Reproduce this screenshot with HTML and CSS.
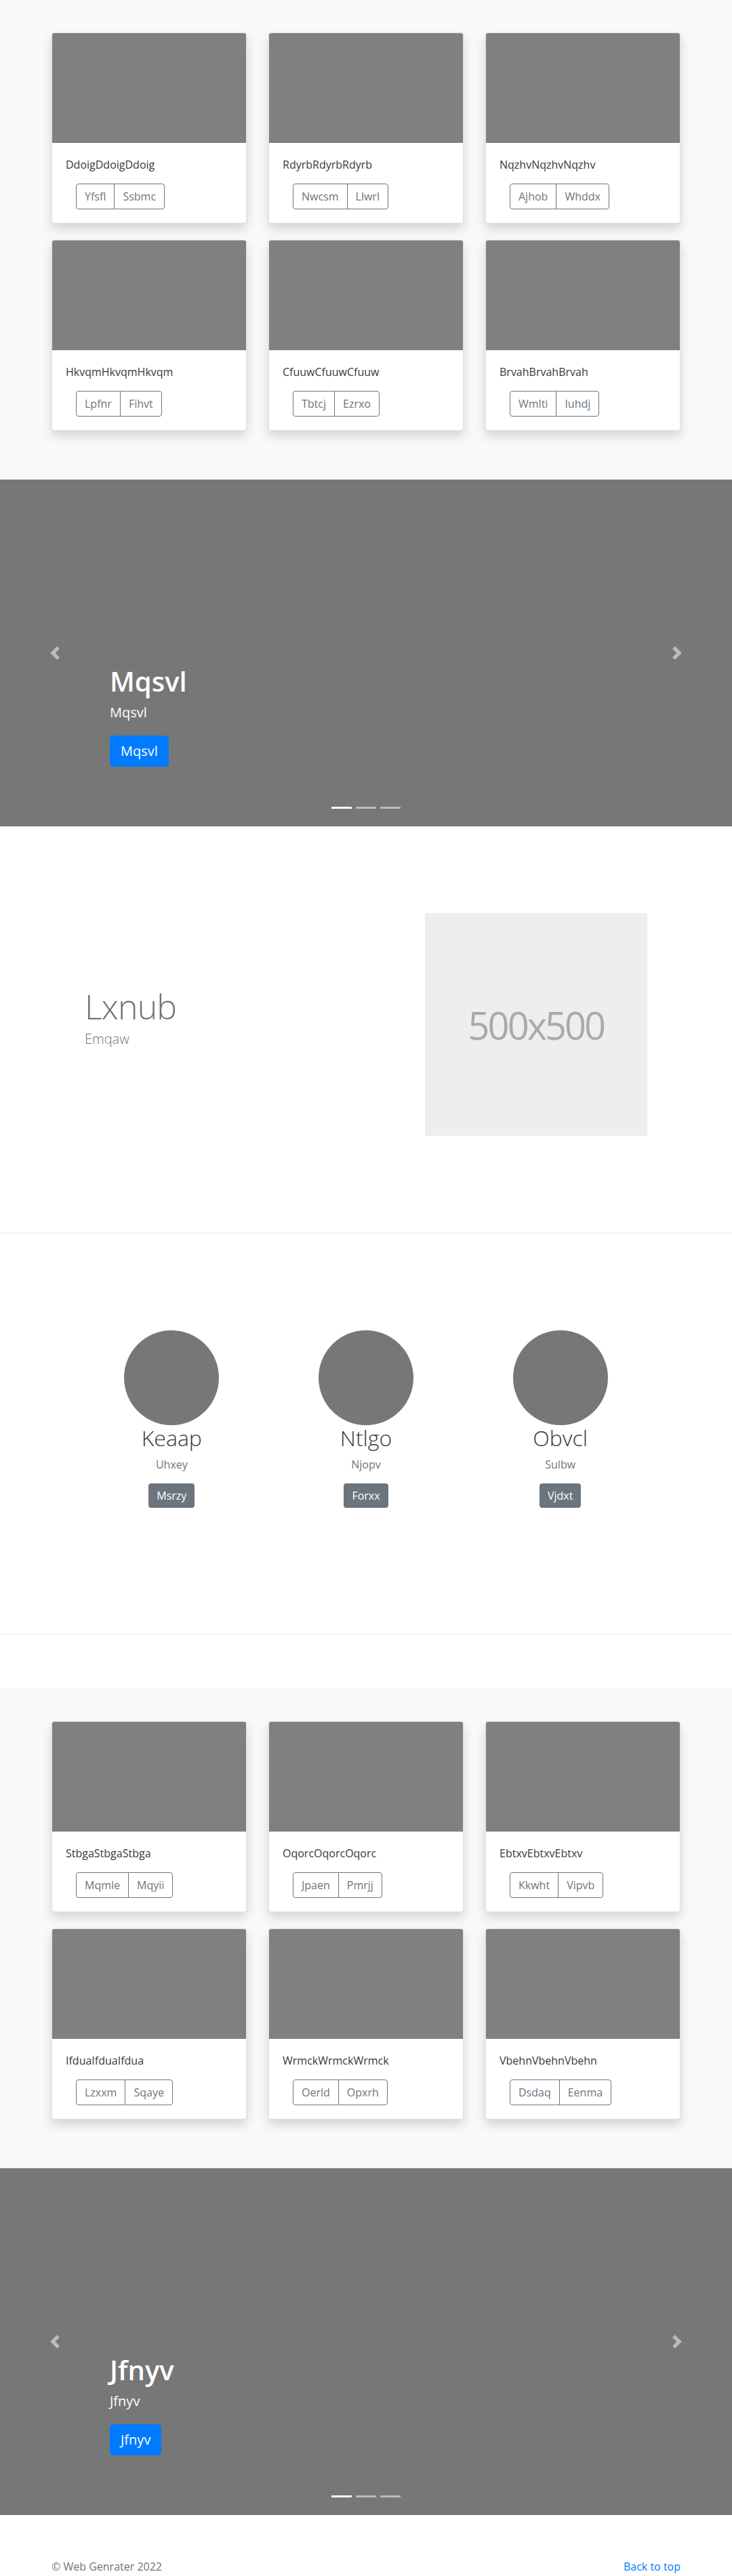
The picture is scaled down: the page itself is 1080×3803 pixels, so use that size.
FILE: index.html
```html
<!DOCTYPE html>
<html lang="en">
<head>
    <meta charset="UTF-8">
    <meta name="viewport" content="width=device-width, initial-scale=1.0">
    <title>Web Genrater</title>
    <link rel="stylesheet" href="styles.css">
</head>
<body>
    <main>
        <section class="album">
            <div class="album-grid">
                <div class="card">
                    <div class="card-img"></div>
                    <div class="card-body">
                        <p class="card-text">DdoigDdoigDdoig</p>
                        <div class="btn-group"><button class="btn-outline">Yfsfl</button><button class="btn-outline">Ssbmc</button></div>
                    </div>
                </div>
                <div class="card">
                    <div class="card-img"></div>
                    <div class="card-body">
                        <p class="card-text">RdyrbRdyrbRdyrb</p>
                        <div class="btn-group"><button class="btn-outline">Nwcsm</button><button class="btn-outline">Llwrl</button></div>
                    </div>
                </div>
                <div class="card">
                    <div class="card-img"></div>
                    <div class="card-body">
                        <p class="card-text">NqzhvNqzhvNqzhv</p>
                        <div class="btn-group"><button class="btn-outline">Ajhob</button><button class="btn-outline">Whddx</button></div>
                    </div>
                </div>
                <div class="card">
                    <div class="card-img"></div>
                    <div class="card-body">
                        <p class="card-text">HkvqmHkvqmHkvqm</p>
                        <div class="btn-group"><button class="btn-outline">Lpfnr</button><button class="btn-outline">Fihvt</button></div>
                    </div>
                </div>
                <div class="card">
                    <div class="card-img"></div>
                    <div class="card-body">
                        <p class="card-text">CfuuwCfuuwCfuuw</p>
                        <div class="btn-group"><button class="btn-outline">Tbtcj</button><button class="btn-outline">Ezrxo</button></div>
                    </div>
                </div>
                <div class="card">
                    <div class="card-img"></div>
                    <div class="card-body">
                        <p class="card-text">BrvahBrvahBrvah</p>
                        <div class="btn-group"><button class="btn-outline">Wmlti</button><button class="btn-outline">Iuhdj</button></div>
                    </div>
                </div>
            </div>
        </section>

        <section class="carousel">
            <ol class="carousel-indicators">
                <li class="active"></li>
                <li></li>
                <li></li>
            </ol>
            <div class="carousel-caption">
                <h1>Mqsvl</h1>
                <p>Mqsvl</p>
                <p><a class="btn-lg" href="#">Mqsvl</a></p>
            </div>
            <a class="carousel-control prev" href="#">
                <svg width="20" height="20" viewBox="0 0 8 8"><path fill="#fff" d="M5.25 0l-4 4 4 4 1.5-1.5L4.25 4l2.5-2.5L5.25 0z"/></svg>
            </a>
            <a class="carousel-control next" href="#">
                <svg width="20" height="20" viewBox="0 0 8 8"><path fill="#fff" d="M2.75 0l-1.5 1.5L3.75 4l-2.5 2.5L2.75 8l4-4-4-4z"/></svg>
            </a>
        </section>

        <section class="featurette">
            <div class="narrow">
                <div class="feature-text">
                    <h2 class="featurette-heading">Lxnub</h2>
                    <p class="lead">Emqaw</p>
                </div>
                <div class="feature-media">
                    <div class="placeholder">500x500</div>
                </div>
            </div>
        </section>

        <section class="marketing">
            <div class="narrow">
                <div class="person">
                    <div class="avatar"></div>
                    <h2>Keaap</h2>
                    <p class="muted">Uhxey</p>
                    <p><a class="btn-secondary" href="#">Msrzy</a></p>
                </div>
                <div class="person">
                    <div class="avatar"></div>
                    <h2>Ntlgo</h2>
                    <p class="muted">Njopv</p>
                    <p><a class="btn-secondary" href="#">Forxx</a></p>
                </div>
                <div class="person">
                    <div class="avatar"></div>
                    <h2>Obvcl</h2>
                    <p class="muted">Sulbw</p>
                    <p><a class="btn-secondary" href="#">Vjdxt</a></p>
                </div>
            </div>
        </section>

        <section class="album album-second">
            <div class="album-grid">
                <div class="card">
                    <div class="card-img"></div>
                    <div class="card-body">
                        <p class="card-text">StbgaStbgaStbga</p>
                        <div class="btn-group"><button class="btn-outline">Mqmle</button><button class="btn-outline">Mqyii</button></div>
                    </div>
                </div>
                <div class="card">
                    <div class="card-img"></div>
                    <div class="card-body">
                        <p class="card-text">OqorcOqorcOqorc</p>
                        <div class="btn-group"><button class="btn-outline">Jpaen</button><button class="btn-outline">Pmrjj</button></div>
                    </div>
                </div>
                <div class="card">
                    <div class="card-img"></div>
                    <div class="card-body">
                        <p class="card-text">EbtxvEbtxvEbtxv</p>
                        <div class="btn-group"><button class="btn-outline">Kkwht</button><button class="btn-outline">Vipvb</button></div>
                    </div>
                </div>
                <div class="card">
                    <div class="card-img"></div>
                    <div class="card-body">
                        <p class="card-text">IfduaIfduaIfdua</p>
                        <div class="btn-group"><button class="btn-outline">Lzxxm</button><button class="btn-outline">Sqaye</button></div>
                    </div>
                </div>
                <div class="card">
                    <div class="card-img"></div>
                    <div class="card-body">
                        <p class="card-text">WrmckWrmckWrmck</p>
                        <div class="btn-group"><button class="btn-outline">Oerld</button><button class="btn-outline">Opxrh</button></div>
                    </div>
                </div>
                <div class="card">
                    <div class="card-img"></div>
                    <div class="card-body">
                        <p class="card-text">VbehnVbehnVbehn</p>
                        <div class="btn-group"><button class="btn-outline">Dsdaq</button><button class="btn-outline">Eenma</button></div>
                    </div>
                </div>
            </div>
        </section>

        <section class="carousel">
            <ol class="carousel-indicators">
                <li class="active"></li>
                <li></li>
                <li></li>
            </ol>
            <div class="carousel-caption">
                <h1>Jfnyv</h1>
                <p>Jfnyv</p>
                <p><a class="btn-lg" href="#">Jfnyv</a></p>
            </div>
            <a class="carousel-control prev" href="#">
                <svg width="20" height="20" viewBox="0 0 8 8"><path fill="#fff" d="M5.25 0l-4 4 4 4 1.5-1.5L4.25 4l2.5-2.5L5.25 0z"/></svg>
            </a>
            <a class="carousel-control next" href="#">
                <svg width="20" height="20" viewBox="0 0 8 8"><path fill="#fff" d="M2.75 0l-1.5 1.5L3.75 4l-2.5 2.5L2.75 8l4-4-4-4z"/></svg>
            </a>
        </section>
    </main>

    <footer class="footer">
        <p>&copy; Web Genrater 2022</p>
        <a href="#">Back to top</a>
    </footer>
</body>
</html>
```

FILE: styles.css
```css
* {
    box-sizing: border-box;
}

body {
    margin: 0;
    font-family: "Open Sans", "Noto Sans", sans-serif;
    font-size: 16px;
    line-height: 1.5;
    color: #212529;
    background: #fff;
}

p {
    margin: 0;
}

a {
    text-decoration: none;
}

/* album */

.album {
    background: #f8f9fa;
    padding: 48px 0 72px;
}

.album-second {
    margin-top: 80px;
}

.album-grid {
    width: 928px;
    margin: 0 auto;
    display: grid;
    grid-template-columns: repeat(3, 288px);
    column-gap: 32px;
    row-gap: 24px;
}

.card {
    background: #fff;
    border: 1px solid rgba(0, 0, 0, 0.125);
    border-radius: 4px;
    overflow: hidden;
    box-shadow: 0 8px 16px rgba(0, 0, 0, 0.15);
}

.card-img {
    height: 162px;
    background: #808080;
}

.card-body {
    padding: 20px;
}

.card-text {
    margin-bottom: 16px;
    color: #343a40;
}

.btn-group {
    display: inline-flex;
    margin-left: 15px;
}

.btn-outline {
    font-family: inherit;
    font-size: 16px;
    line-height: 1.5;
    padding: 6px 12px;
    color: #6c757d;
    background: transparent;
    border: 1px solid #6c757d;
    cursor: pointer;
}

.btn-outline:first-child {
    border-radius: 4px 0 0 4px;
}

.btn-outline:last-child {
    border-radius: 0 4px 4px 0;
    margin-left: -1px;
}

/* carousel */

.carousel {
    position: relative;
    height: 512px;
    background: #777;
}

.carousel-caption {
    position: absolute;
    left: 15%;
    right: 15%;
    bottom: 48px;
    padding: 20px 0;
    color: #fff;
    text-align: left;
}

.carousel-caption h1 {
    margin: 0 0 8px;
    font-size: 40px;
    font-weight: 600;
    line-height: 1.2;
}

.carousel-caption p {
    font-size: 20px;
    line-height: 1.4;
    margin-bottom: 20px;
}

.btn-lg {
    display: inline-block;
    padding: 8px 16px;
    font-size: 20px;
    line-height: 1.5;
    color: #fff;
    background: #007bff;
    border-radius: 5px;
}

.carousel-control {
    position: absolute;
    top: 0;
    bottom: 0;
    width: 15%;
    display: flex;
    align-items: center;
    justify-content: center;
    opacity: 0.5;
}

.carousel-control.prev {
    left: 0;
}

.carousel-control.next {
    right: 0;
}

.carousel-indicators {
    position: absolute;
    left: 0;
    right: 0;
    bottom: 0;
    display: flex;
    justify-content: center;
    list-style: none;
    padding: 0;
    margin: 0 15% 16px;
}

.carousel-indicators li {
    width: 30px;
    height: 3px;
    margin: 0 3px;
    box-sizing: content-box;
    background: #fff;
    background-clip: padding-box;
    border-top: 10px solid transparent;
    border-bottom: 10px solid transparent;
    opacity: 0.5;
}

.carousel-indicators li.active {
    opacity: 1;
}

/* featurette */

.narrow {
    width: 860px;
    margin: 0 auto;
    display: flex;
}

.featurette {
    padding: 128px 0 143px;
    border-bottom: 1px solid #e6e6e6;
}

.featurette .narrow {
    align-items: center;
}

.feature-text {
    flex: 0 0 58.333%;
    padding: 0 15px;
}

.feature-media {
    flex: 0 0 41.667%;
    padding: 0 15px;
}

.featurette-heading {
    margin: 0 0 8px;
    font-size: 50px;
    font-weight: 300;
    line-height: 1;
    letter-spacing: -0.8px;
    color: #6c757d;
}

.lead {
    font-size: 20px;
    font-weight: 300;
    color: #6c757d;
    margin-bottom: 16px;
}

.placeholder {
    height: 329px;
    display: flex;
    align-items: center;
    justify-content: center;
    background: #eee;
    color: #aaa;
    font-size: 56px;
    letter-spacing: -3px;
}

/* marketing */

.marketing {
    padding: 143px 0 186px;
    border-bottom: 1px solid #e6e6e6;
}

.person {
    flex: 1;
    text-align: center;
}

.avatar {
    width: 140px;
    height: 140px;
    margin: 0 auto;
    border-radius: 50%;
    background: #777;
}

.person h2 {
    margin: 0 0 8px;
    font-size: 32px;
    font-weight: 300;
    line-height: 1.2;
    color: #343a40;
}

.muted {
    color: #6c757d;
    margin-bottom: 16px;
}

.btn-secondary {
    display: inline-block;
    padding: 6px 12px;
    color: #fff;
    background: #6c757d;
    border-radius: 4px;
}

/* footer */

.footer {
    width: 928px;
    margin: 0 auto;
    padding-top: 64px;
    display: flex;
    justify-content: space-between;
    color: #6c757d;
}

.footer a {
    color: #007bff;
}
```
